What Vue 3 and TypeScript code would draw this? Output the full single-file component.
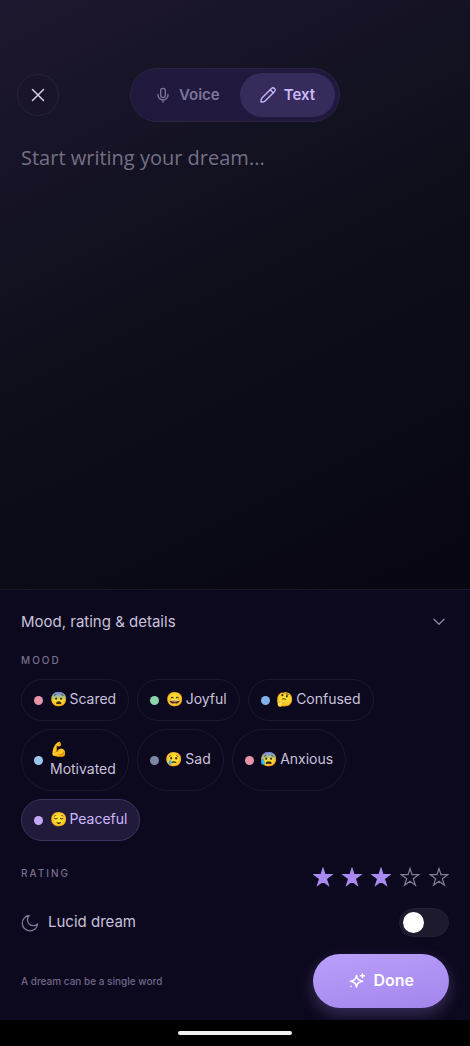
<script setup lang="ts">
import { ref } from 'vue'

interface Mood {
  name: string
  emoji: string
  color: string
  stacked?: boolean
}

const moods: Mood[] = [
  { name: 'Scared', emoji: '😨', color: '#e594a9' },
  { name: 'Joyful', emoji: '😄', color: '#8fd3ae' },
  { name: 'Confused', emoji: '🤔', color: '#7fb3ea' },
  { name: 'Motivated', emoji: '💪', color: '#9cc5ee', stacked: true },
  { name: 'Sad', emoji: '😢', color: '#7c86a3' },
  { name: 'Anxious', emoji: '😰', color: '#e594a9' },
  { name: 'Peaceful', emoji: '😌', color: '#c4a7f7' },
]

const mode = ref<'voice' | 'text'>('text')
const dream = ref('')
const selected = ref('Peaceful')
const rating = ref(3)
const lucid = ref(false)
const open = ref(true)
</script>

<template>
  <div class="page">
    <main class="writer">
      <header class="top">
        <button class="close" type="button" aria-label="Close">
          <svg width="14" height="14" viewBox="0 0 14 14" fill="none" stroke="currentColor" stroke-width="1.5" stroke-linecap="round">
            <path d="M1.5 1.5l11 11M12.5 1.5l-11 11" />
          </svg>
        </button>
        <div class="modes">
          <button class="mode" :class="{ active: mode === 'voice' }" type="button" @click="mode = 'voice'">
            <svg width="16" height="16" viewBox="0 0 24 24" fill="none" stroke="currentColor" stroke-width="2" stroke-linecap="round" stroke-linejoin="round">
              <rect x="8.5" y="2" width="7" height="14" rx="3.5" />
              <path d="M4.500 11v1a7.500 7.500 0 0 0 15 0v-1M12 20v3" />
            </svg>
            <span>Voice</span>
          </button>
          <button class="mode" :class="{ active: mode === 'text' }" type="button" @click="mode = 'text'">
            <svg width="16" height="16" viewBox="0 0 24 24" fill="none" stroke="currentColor" stroke-width="2" stroke-linecap="round" stroke-linejoin="round">
              <path d="M1.500 22.500c-.2-2.500.3-5 2-6.700L17.300 2.200a3 3 0 0 1 4.500 4.500L8 20.500c-1.700 1.700-4 2.200-6.500 2z" />
              <path d="M15.300 4.200l4.500 4.500" />
            </svg>
            <span>Text</span>
          </button>
        </div>
      </header>
      <textarea v-model="dream" class="entry" placeholder="Start writing your dream..." aria-label="Dream"></textarea>
    </main>

    <section class="panel">
      <button class="summary" type="button" :aria-expanded="open" @click="open = !open">
        <span>Mood, rating &amp; details</span>
        <svg width="12" height="8" viewBox="0 0 12 8" fill="none" stroke="currentColor" stroke-width="1.4" stroke-linecap="round" stroke-linejoin="round">
          <path d="M1 1.200l5 5 5-5" />
        </svg>
      </button>

      <div v-if="open">
        <h2 class="caption">MOOD</h2>
        <div class="moods">
          <button
            v-for="m in moods"
            :key="m.name"
            class="mood"
            :class="{ active: selected === m.name }"
            type="button"
            @click="selected = m.name"
          >
            <span class="dot" :style="{ background: m.color }"></span>
            <span class="mood-text" :class="{ stacked: m.stacked }">
              <span>{{ m.emoji }}</span>
              <span>{{ m.name }}</span>
            </span>
          </button>
        </div>

        <div class="rating">
          <h2 class="caption">RATING</h2>
          <div class="stars" role="radiogroup" aria-label="Rating">
            <label v-for="n in 5" :key="n" class="star" :class="{ on: n <= rating }">
              <input v-model="rating" type="radio" name="rating" :value="n" :aria-label="n + ' of 5'" />
              <svg width="20" height="20" viewBox="0 0 20 20" stroke-width="1.200">
                <path d="M10 1.500L12 7.700H18.700L13.300 11.700L15.400 18.200L10 14.200L4.600 18.200L6.700 11.700L1.300 7.700H8z" />
              </svg>
            </label>
          </div>
        </div>

        <label class="lucid">
          <svg width="18" height="18" viewBox="0 0 18 18" fill="none" stroke="currentColor" stroke-width="1.300" stroke-linejoin="round">
            <path d="M8.200 1.500A7.700 7.700 0 1 0 16.600 10 5.900 5.900 0 0 1 8.200 1.500z" />
          </svg>
          <span class="raised">Lucid dream</span>
          <input v-model="lucid" class="switch" type="checkbox" role="switch" />
        </label>
      </div>

      <footer class="actions">
        <p class="hint">A dream can be a single word</p>
        <button class="done" type="button">
          <svg width="18" height="18" viewBox="0 0 18 18" fill="none" stroke="currentColor" stroke-width="1.600" stroke-linecap="round" stroke-linejoin="round">
            <path d="M8.500 3.500c.7 3.600 1.500 4.600 6 5.700-4.500 1.100-5.300 2.200-6 5.800-.7-3.600-1.500-4.700-6-5.800 4.500-1.100 5.300-2.100 6-5.700z" />
            <path d="M14.500 2v3.600M12.700 3.800h3.600M3 14.200v.2" />
          </svg>
          <span class="raised">Done</span>
        </button>
      </footer>
    </section>

    <div class="system-bar"><span class="handle"></span></div>
  </div>
</template>

<style>
body {
  margin: 0;
  background: #000;
}
</style>

<style scoped>
.page {
  min-height: 100vh;
  display: flex;
  flex-direction: column;
  font-family: Inter, "Noto Sans", "Noto Color Emoji", sans-serif;
  color: #c9c2de;
}

button {
  font: inherit;
  color: inherit;
  background: none;
  border: 0;
  padding: 0;
  cursor: pointer;
}

h2,
p {
  margin: 0;
}

svg {
  display: block;
  flex: none;
}

.writer {
  flex: 1;
  display: flex;
  flex-direction: column;
  padding-top: 68px;
  background: linear-gradient(154deg, #1e172f 0%, #0c0f1a 50%, #080610 100%);
}

.top {
  display: grid;
  grid-template-columns: 1fr auto 1fr;
  align-items: center;
  padding: 0 17px;
}

.close {
  box-sizing: border-box;
  width: 42px;
  height: 42px;
  display: flex;
  align-items: center;
  justify-content: center;
  border: 1px solid #272137;
  border-radius: 50%;
  background: #191427;
  color: #d5cfe4;
}

.modes {
  display: flex;
  padding: 4px;
  border: 1px solid #2a2341;
  border-radius: 27px;
  background: #20193d;
}

.mode {
  height: 44px;
  display: flex;
  align-items: center;
  gap: 8px;
  padding: 0 20px;
  border-radius: 22px;
  font-size: 15px;
  font-weight: 600;
  color: #7e7499;
}

.mode span,
.raised {
  padding-bottom: 2px;
}

.mode.active {
  background: #362b5a;
  color: #cbb8fb;
}

.entry {
  flex: 1;
  box-sizing: border-box;
  width: 100%;
  margin-top: 19px;
  padding: 0 21px;
  border: 0;
  outline: 0;
  resize: none;
  background: none;
  color: #c9c2de;
  font-family: "Open Sans", sans-serif;
  font-size: 20px;
  line-height: 34px;
}

.entry::placeholder {
  color: #757087;
  opacity: 1;
}

.panel {
  padding: 20px 21px 12px;
  border-top: 1px solid #1a1629;
  background: #0c081d;
}

.summary {
  width: 100%;
  display: flex;
  align-items: center;
  justify-content: space-between;
  padding-right: 4px;
  margin-bottom: 18px;
  font-size: 15px;
  line-height: 24px;
}

.summary svg {
  color: #8c84a3;
}

.caption {
  font-size: 10px;
  line-height: 16px;
  font-weight: 500;
  letter-spacing: 2px;
  color: #78708f;
}

.moods {
  display: flex;
  flex-wrap: wrap;
  gap: 8px;
  margin-top: 11px;
}

.mood {
  display: flex;
  align-items: center;
  gap: 7px;
  padding: 9px 12px;
  border: 1px solid #1d182c;
  border-radius: 31px;
  font-size: 14px;
  line-height: 20px;
  text-align: left;
}

.mood.active {
  border-color: #3d3261;
  background: #221a3b;
  color: #cbb8fb;
}

.dot {
  width: 9px;
  height: 9px;
  border-radius: 50%;
}

.mood-text {
  display: flex;
  gap: 2px;
  padding-bottom: 2px;
}

.mood-text.stacked {
  flex-direction: column;
  gap: 0;
}

.rating {
  display: flex;
  align-items: flex-start;
  justify-content: space-between;
  margin-top: 24px;
}

.stars {
  display: flex;
  gap: 9px;
}

.star {
  position: relative;
  height: 24px;
  display: flex;
  align-items: center;
  cursor: pointer;
}

.star input {
  position: absolute;
  inset: 0;
  margin: 0;
  opacity: 0;
}

.star path {
  fill: none;
  stroke: #837c96;
}

.star.on path {
  fill: #a98af0;
  stroke: #a98af0;
}

.lucid {
  display: flex;
  align-items: center;
  gap: 9px;
  margin-top: 19px;
  font-size: 15px;
}

.lucid svg {
  color: #8078a0;
}

.switch {
  appearance: none;
  box-sizing: border-box;
  width: 50px;
  height: 29px;
  margin: 0 0 0 auto;
  padding: 3px;
  border: 1px solid #221d31;
  border-radius: 15px;
  background: #1e1a2e;
}

.switch::before {
  content: "";
  display: block;
  width: 21px;
  height: 21px;
  border-radius: 50%;
  background: #fff;
}

.switch:checked {
  background: #a98af0;
}

.switch:checked::before {
  margin-left: auto;
}

.actions {
  display: flex;
  align-items: center;
  justify-content: space-between;
  margin-top: 17px;
}

.hint {
  font-size: 10px;
  font-weight: 500;
  color: #6f6788;
}

.done {
  height: 54px;
  display: flex;
  align-items: center;
  gap: 7px;
  padding: 0 35px;
  border-radius: 27px;
  background: linear-gradient(170deg, #b9a0fb, #a385ec);
  box-shadow: 0 6px 16px rgba(169, 138, 240, 0.3);
  color: #fff;
  font-size: 16px;
  font-weight: 600;
}

.system-bar {
  position: relative;
  height: 26px;
  display: flex;
  align-items: center;
  justify-content: center;
  background: #000;
}

.handle {
  width: 114px;
  height: 4px;
  border-radius: 2px;
  background: #f2f2f2;
}
</style>
